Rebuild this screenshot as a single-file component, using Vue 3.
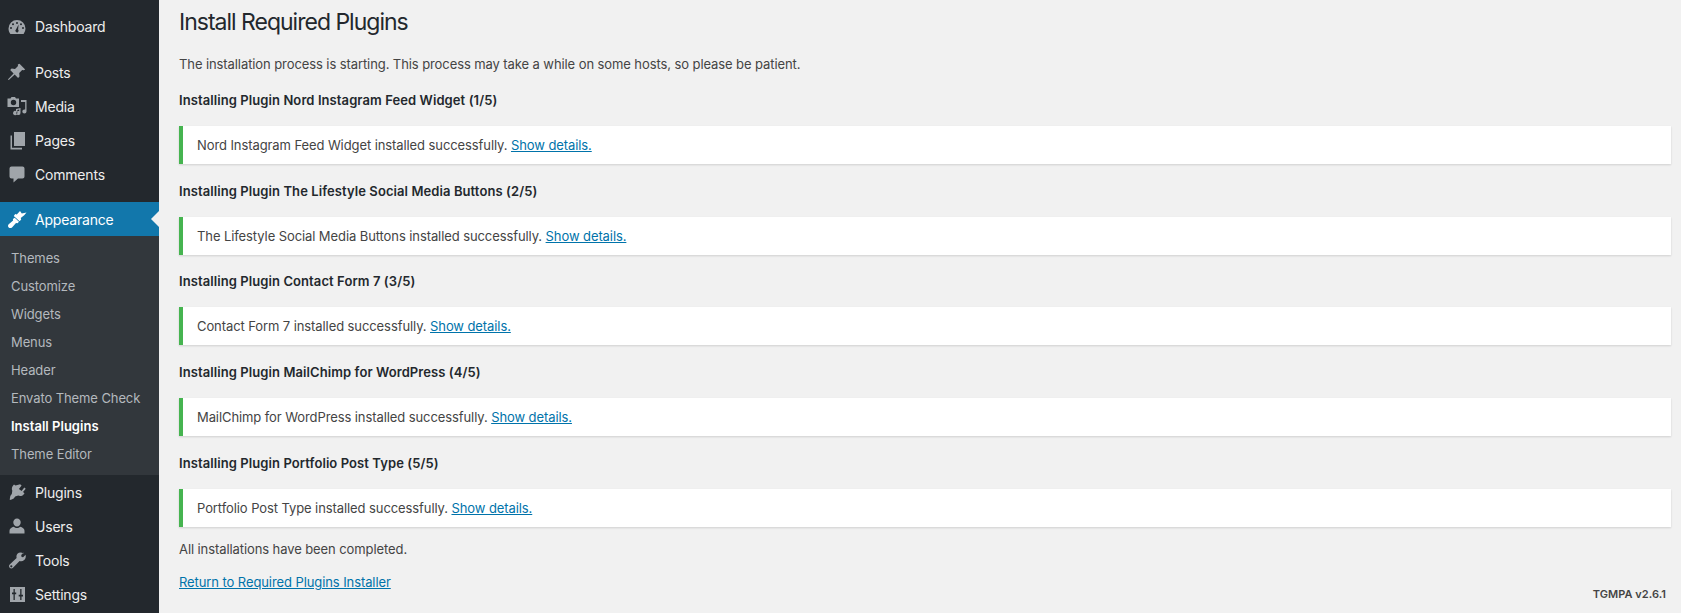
<script setup>
const top1 = [{ n: 'Dashboard', i: 'dash' }]
const top2 = [
  { n: 'Posts', i: 'pin' },
  { n: 'Media', i: 'media' },
  { n: 'Pages', i: 'pages' },
  { n: 'Comments', i: 'comment' },
]
const subs = ['Themes', 'Customize', 'Widgets', 'Menus', 'Header', 'Envato Theme Check', 'Install Plugins', 'Theme Editor']
const bottom = [
  { n: 'Plugins', i: 'plug' },
  { n: 'Users', i: 'user' },
  { n: 'Tools', i: 'tool' },
  { n: 'Settings', i: 'set' },
]
const paths = {
  dash: 'M10 3a8.500 8.500 0 0 0-8.500 8.500c0 2 .7 3.900 1.900 5.400h13.200a8.500 8.500 0 0 0 1.900-5.400A8.500 8.500 0 0 0 10 3zM10 5a1 1 0 1 1 0 2 1 1 0 0 1 0-2zM6 6.200a1 1 0 1 1 0 2 1 1 0 0 1 0-2zM14 6.200a1 1 0 1 1 0 2 1 1 0 0 1 0-2zM4 10a1 1 0 1 1 0 2 1 1 0 0 1 0-2zM16 10a1 1 0 1 1 0 2 1 1 0 0 1 0-2zM11.600 7.600l-.5 5a1.600 1.600 0 1 1-2.100-.1z',
  pin: 'M12.500 1.800l5.700 5.700-1.600.8-1.400-.2-3 3 .3 3.400-1.400 1.400-3.400-3.400-5.600 5.300-1.100.3.300-1.100 5.300-5.600-3.400-3.400 1.400-1.400 3.400.3 3-3-.2-1.400z',
  media: 'M.5 2.500h3l1-1.500h3.500l1 1.500h3v8.500H.5zM6.500 3.800a2.700 2.700 0 1 0 0 5.400 2.700 2.700 0 0 0 0-5.400zM14 4h5.500v11.500a2.100 2.100 0 1 1-2.100-2.100c.3 0 .6 0 .8.100V6H14zM9 13l4.500-1v4.800a2.100 2.100 0 1 1-2.100-1.900l.8.100v-1.400l-1.900.4v3a2.100 2.100 0 1 1-1.300-1.900z',
  pages: 'M7 2h11v14H7zM5 5.500v12.300h10v1.700H3.500v-14z',
  comment: 'M4.500 2.500h11a2 2 0 0 1 2 2v8a2 2 0 0 1-2 2H11l-4.500 4v-4h-2a2 2 0 0 1-2-2v-8a2 2 0 0 1 2-2z',
  brush: 'M19.500 3.500l-4.700 1-1.800-2.500-3.200 3.500-1.600-.5-1.400 2 5.800 5.200 1.600-1.800-.5-1.500 3.500-2.700zM7.700 8.800l4.300 4-1.500 1.500-1.500-.2-4 4.300c-.9.900-2.400.9-3.300 0s-.9-2.300 0-3.200l4.400-3.800-.2-1.400z',
  plug: 'M13.100 2.300l1.500 1.100-2.700 3.500 2.700 2 2.700-3.300 1.400 1.100-2.700 3.400 1.500 1.200-.9 1.100c-1.400 1.700-3.600 2.100-5.400 1.200l-3 1-1.500 1.900c-.3.400-2.400 1.300-3.900 1.500 0-1.400.4-4 .8-4.500l1.200-1.500.5-3.200c-.8-1.800-.5-3.900.8-5.300l.9-1.100 1.500 1.200z',
  user: 'M10 2.500a3.700 3.700 0 0 1 3.700 4c0 2.200-1.700 4-3.700 4s-3.700-1.800-3.700-4a3.700 3.700 0 0 1 3.700-4zM6.800 10.800c.8.800 2 1.200 3.200 1.200s2.400-.4 3.200-1.200c2.200.5 4.300 2 4.300 4v2.700h-15v-2.700c0-2 2.100-3.500 4.300-4z',
  tool: 'M16.700 2.600l-2.500 2.500.4 1.800 1.500.4 2.500-2.500c.5 2.100 0 4-1.400 5.200-1.300 1.200-3 1.500-4.600 1l-6.600 6.800c-.9.900-2.400.9-3.300 0s-.9-2.300 0-3.200l6.900-6.600c-.4-1.600-.1-3.300 1.100-4.500 1.400-1.300 3.900-1.300 6 .1zM4.300 15.200a1.100 1.100 0 1 0 0 2.200 1.100 1.100 0 0 0 0-2.200z',
  set: 'M3 3h15v15H3zM6.500 5v3.500H5v1.800h1.500V16h1.300v-5.700h1.400V8.500H7.800V5zM13.200 5v5.700h-1.500v1.800h1.500V16h1.300v-3.500H16v-1.800h-1.500V5z',
}
const notices = [
  { h: 'Installing Plugin Nord Instagram Feed Widget (1/5)', t: 'Nord Instagram Feed Widget installed successfully.' },
  { h: 'Installing Plugin The Lifestyle Social Media Buttons (2/5)', t: 'The Lifestyle Social Media Buttons installed successfully.' },
  { h: 'Installing Plugin Contact Form 7 (3/5)', t: 'Contact Form 7 installed successfully.' },
  { h: 'Installing Plugin MailChimp for WordPress (4/5)', t: 'MailChimp for WordPress installed successfully.' },
  { h: 'Installing Plugin Portfolio Post Type (5/5)', t: 'Portfolio Post Type installed successfully.' },
]
</script>

<template>
  <div class="page">
    <aside class="side">
      <div class="group first">
        <a v-for="m in top1" :key="m.n" class="item">
          <svg class="ico" viewBox="0 0 20 20"><path :d="paths[m.i]" fill-rule="evenodd" /></svg>
          <span>{{ m.n }}</span>
        </a>
      </div>
      <div class="group">
        <a v-for="m in top2" :key="m.n" class="item">
          <svg class="ico" viewBox="0 0 20 20"><path :d="paths[m.i]" fill-rule="evenodd" /></svg>
          <span>{{ m.n }}</span>
        </a>
      </div>
      <div class="group">
        <a class="item current">
          <svg class="ico" viewBox="0 0 20 20"><path :d="paths.brush" fill-rule="evenodd" /></svg>
          <span>Appearance</span>
          <i class="arrow"></i>
        </a>
        <ul class="sub">
          <li v-for="s in subs" :key="s" :class="{ on: s === 'Install Plugins' }">{{ s }}</li>
        </ul>
        <a v-for="m in bottom" :key="m.n" class="item">
          <svg class="ico" viewBox="0 0 20 20"><path :d="paths[m.i]" fill-rule="evenodd" /></svg>
          <span>{{ m.n }}</span>
        </a>
      </div>
    </aside>
    <main class="main">
      <h1>Install Required Plugins</h1>
      <p class="intro">The installation process is starting. This process may take a while on some hosts, so please be patient.</p>
      <template v-for="n in notices" :key="n.h">
        <h2>{{ n.h }}</h2>
        <div class="notice">{{ n.t }} <a href="#">Show details.</a></div>
      </template>
      <p class="done">All installations have been completed.</p>
      <p class="ret"><a href="#">Return to Required Plugins Installer</a></p>
      <div class="ver">TGMPA v2.6.1</div>
    </main>
  </div>
</template>

<style>
html, body { margin: 0; background: #f1f1f1; overflow: hidden; }
</style>

<style scoped>
.page {
  display: flex;
  width: 1681px;
  height: 613px;
  overflow: hidden;
  background: #f1f1f1;
  font-family: Inter, "Liberation Sans", sans-serif;
  font-size: 13px;
  letter-spacing: -0.09px;
  color: #444;
}
.side {
  width: 159px;
  flex: none;
  height: 613px;
  overflow: hidden;
  background: #23282d;
  color: #eee;
}
.group { margin-top: 11px; }
.first { margin-top: 10px; }
.item {
  display: flex;
  align-items: center;
  height: 34px;
  box-sizing: border-box;
  position: relative;
  font-size: 14px;
  letter-spacing: -0.2px;
  color: #eee;
}
.first .item { padding-bottom: 1px; }
.ico {
  width: 20px;
  height: 20px;
  margin-left: 7px;
  margin-right: 8px;
  fill: #a0a5aa;
  flex: none;
}
.current { background: #1277ab; color: #fff; }
.current .ico { fill: #fff; }
.arrow {
  position: absolute;
  right: 0;
  top: 9px;
  border: 8px solid transparent;
  border-right-color: #f1f1f1;
  border-left: 0;
}
.sub {
  list-style: none;
  margin: 0;
  padding: 7.500px 0;
  background: #32373c;
  color: #b4b9be;
  font-size: 13px;
  letter-spacing: -0.1px;
}
.sub li {
  height: 28px;
  line-height: 28px;
  padding-left: 11px;
}
.sub li.on { color: #fff; font-weight: 600; letter-spacing: 0.02px; }
.main {
  flex: 1;
  min-width: 0;
  position: relative;
  padding: 0 10px 0 20px;
}
h1 {
  margin: 0;
  padding-top: 9px;
  font-size: 23px;
  line-height: 27px;
  font-weight: 400;
  letter-spacing: -1px;
  color: #23282d;
}
.intro { margin: 0; padding-top: 18px; line-height: 20px; }
h2 {
  margin: 0;
  padding-top: 16.650px;
  font-size: 13px;
  line-height: 20px;
  font-weight: 600;
  letter-spacing: 0.085px;
  color: #23282d;
}
.intro + h2 { padding-top: 16px; }
.notice {
  margin-top: 16px;
  height: 38px;
  line-height: 38px;
  box-sizing: border-box;
  background: #fff;
  border-left: 4px solid #46b450;
  padding-left: 14px;
  box-shadow: 0 1px 2px rgba(0, 0, 0, .14);
}
a { color: #0073aa; text-decoration: underline; }
.item { text-decoration: none; }
.done { margin: 12px 0 0; line-height: 20px; }
.ret { margin: 13px 0 0; line-height: 20px; }
.ver {
  position: absolute;
  right: 15px;
  top: 586px;
  font-size: 11px;
  line-height: 16px;
  font-weight: 600;
  letter-spacing: 0.05px;
}
</style>
